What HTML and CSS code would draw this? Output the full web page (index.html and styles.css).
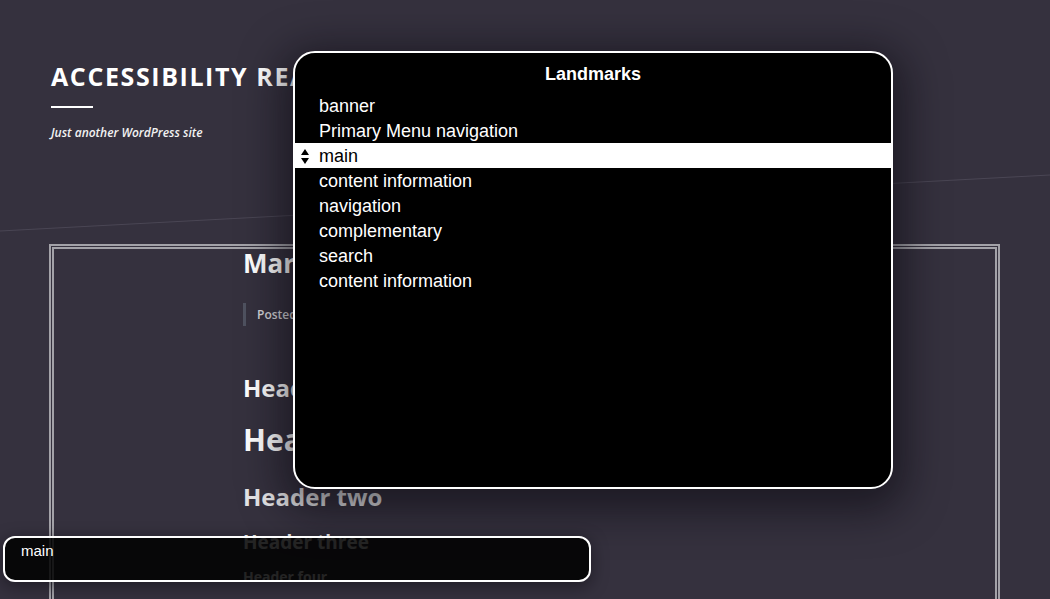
FILE: index.html
```html
<!DOCTYPE html>
<html lang="en">
  <head>
    <meta charset="UTF-8" />
    <meta name="viewport" content="width=device-width, initial-scale=1.0" />
    <title>Accessibility Ready</title>
    <link rel="stylesheet" href="styles.css">
  </head>
  <body>
    <svg class="backdrop" width="1050" height="599" aria-hidden="true">
      <line x1="0" y1="231" x2="1050" y2="175" stroke="#4a4654" stroke-width="1" />
    </svg>

    <header class="site-header">
      <h1 class="site-title">ACCESSIBILITY READY</h1>
      <div class="title-rule"></div>
      <p class="site-tagline">Just another WordPress site</p>
    </header>

    <main class="frame">
      <article class="entry">
        <h2 class="entry-title">Markup: HTML Tags and Formatting</h2>
        <div class="entry-meta">Posted on September 5, 2008</div>
        <h2 class="h-section">Headings</h2>
        <h1 class="h-one">Header one</h1>
        <h2 class="h-two">Header two</h2>
        <h3 class="h-three">Header three</h3>
        <h4 class="h-four">Header four</h4>
      </article>
    </main>

    <!-- screen reader landmarks rotor -->
    <div class="rotor">
      <div class="rotor-title">Landmarks</div>
      <ul class="rotor-list">
        <li class="rotor-item"><span class="marker"></span>banner</li>
        <li class="rotor-item"><span class="marker"></span>Primary Menu navigation</li>
        <li class="rotor-item selected">
          <span class="marker">
            <svg width="8" height="15" viewBox="0 0 8 15">
              <polygon points="0,6 4,0 8,6" fill="#000" />
              <polygon points="0,9 8,9 4,15" fill="#000" />
            </svg>
          </span>main
        </li>
        <li class="rotor-item"><span class="marker"></span>content information</li>
        <li class="rotor-item"><span class="marker"></span>navigation</li>
        <li class="rotor-item"><span class="marker"></span>complementary</li>
        <li class="rotor-item"><span class="marker"></span>search</li>
        <li class="rotor-item"><span class="marker"></span>content information</li>
      </ul>
    </div>

    <div class="caption-panel">main</div>
  </body>
</html>
```

FILE: styles.css
```css
body {
  margin: 0;
  height: 599px;
  overflow: hidden;
  background: #35313e;
  color: #fff;
  font-family: "Open Sans", sans-serif;
}
.backdrop {
  position: absolute;
  top: 0;
  left: 0;
}
.site-header {
  position: relative;
  padding: 61px 51px 0;
  height: 244px;
  box-sizing: border-box;
}
.site-title {
  margin: 0;
  font-size: 25px;
  line-height: 30px;
  font-weight: 700;
  letter-spacing: 1.6px;
  white-space: nowrap;
}
.title-rule {
  width: 42px;
  height: 2px;
  background: #fff;
  margin-top: 15px;
}
.site-tagline {
  margin: 16px 0 0;
  font-size: 12px;
  line-height: 18px;
  font-style: italic;
  font-weight: 600;
  color: #f2f2f2;
}
.frame {
  position: relative;
  margin-left: 49px;
  width: 951px;
  height: 360px;
  box-sizing: border-box;
  border: 5px double #a3a2a8;
  border-bottom: none;
}
.entry {
  padding-left: 189px;
}
.entry h1,
.entry h2,
.entry h3,
.entry h4 {
  font-weight: 700;
  white-space: nowrap;
  margin-bottom: 0;
}
.entry-title {
  margin: 0;
  font-size: 26px;
  line-height: 28px;
}
.entry-meta {
  margin-top: 26px;
  height: 23px;
  line-height: 23px;
  border-left: 3px solid #4f5260;
  padding-left: 11px;
  font-size: 12px;
  font-weight: 600;
  color: #d6d6da;
}
.h-section {
  margin-top: 47px;
  font-size: 24px;
  line-height: 30px;
}
.h-one {
  margin-top: 19px;
  font-size: 30px;
  line-height: 36px;
}
.h-two {
  margin-top: 24px;
  font-size: 24px;
  line-height: 30px;
  color: #e4e4e6;
}
.h-three {
  margin-top: 18px;
  font-size: 19px;
  line-height: 24px;
}
.h-four {
  margin-top: 13px;
  font-size: 14px;
  line-height: 20px;
}
.rotor {
  position: absolute;
  left: 293px;
  top: 51px;
  width: 600px;
  height: 438px;
  box-sizing: border-box;
  border: 2px solid #fff;
  border-radius: 22px;
  background: #000;
  padding-top: 9px;
  box-shadow: 0 10px 40px 12px rgba(10, 8, 14, 0.55);
  font-family: "Liberation Sans", Arial, sans-serif;
}
.rotor-title {
  text-align: center;
  font-size: 18px;
  font-weight: 700;
  line-height: 25px;
}
.rotor-list {
  list-style: none;
  margin: 6px 0 0;
  padding: 0;
}
.rotor-item {
  display: flex;
  align-items: center;
  height: 25px;
  padding-top: 2px;
  box-sizing: border-box;
  font-size: 18px;
}
.rotor-item.selected {
  background: #fff;
  color: #000;
}
.marker {
  width: 24px;
  display: flex;
  align-items: center;
  padding-left: 6px;
  box-sizing: border-box;
}
.caption-panel {
  position: absolute;
  left: 3px;
  top: 536px;
  width: 588px;
  height: 46px;
  box-sizing: border-box;
  border: 2px solid #fff;
  border-radius: 12px;
  background: rgba(0, 0, 0, 0.86);
  padding: 4px 16px 0;
  font-family: "Liberation Sans", Arial, sans-serif;
  font-size: 15px;
  line-height: 18px;
  box-shadow: 0 4px 16px rgba(10, 8, 14, 0.5);
}
```
